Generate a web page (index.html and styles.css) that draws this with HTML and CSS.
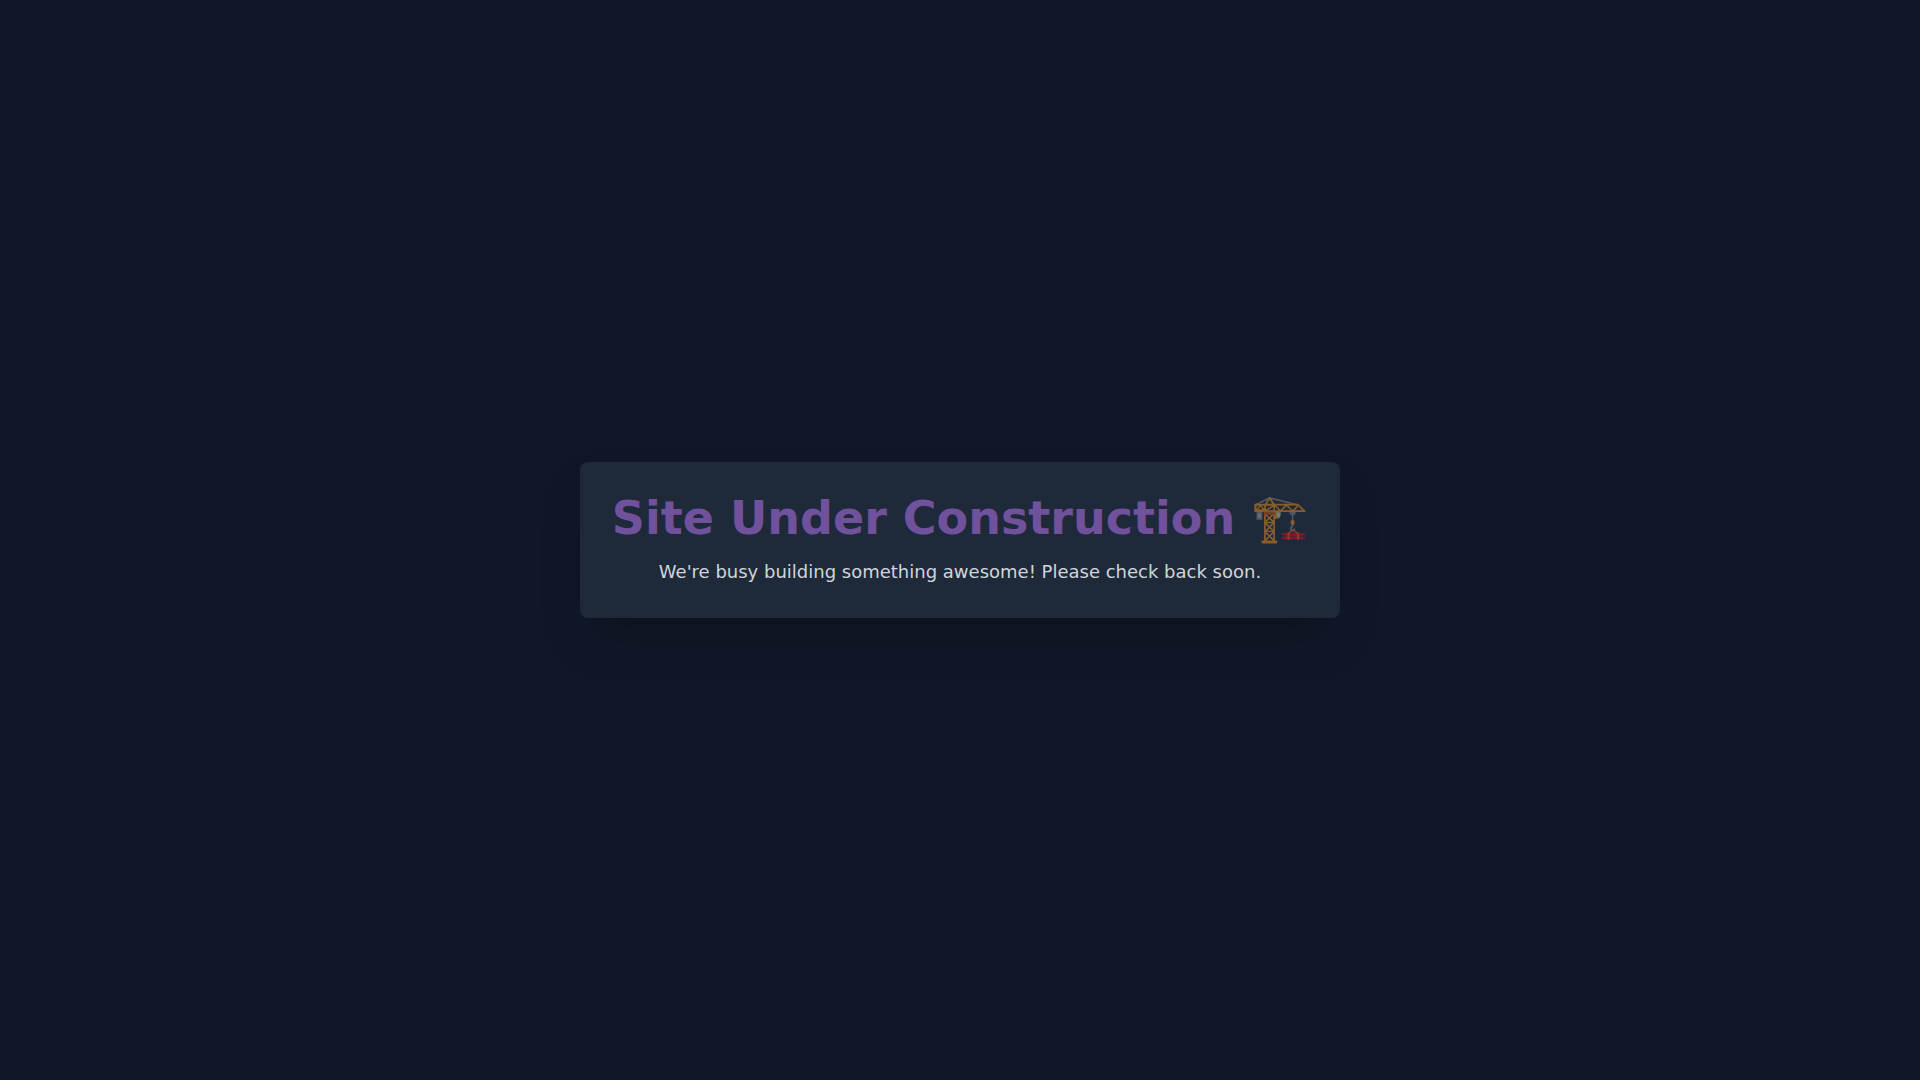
FILE: index.html
```html
<!DOCTYPE html>
<html lang="en">

<head>
    <meta charset="UTF-8">
    <meta name="viewport" content="width=device-width, initial-scale=1.0">
    <title>Site Under Construction</title>
    <link rel="stylesheet" href="styles.css">
</head>

<body>
    <main class="card">
        <h1 class="title">Site Under Construction 🏗️</h1>
        <p class="message">We're busy building something awesome! Please check back soon.</p>
    </main>
</body>

</html>
```

FILE: styles.css
```css
* {
    box-sizing: border-box;
    margin: 0;
}

body {
    display: flex;
    align-items: center;
    justify-content: center;
    min-height: 100vh;
    background-color: #101828;
    font-family: "DejaVu Sans", sans-serif;
}

.card {
    padding: 32px;
    border-radius: 8px;
    background-color: #1e2939;
    box-shadow: 0 25px 50px -12px rgba(0, 0, 0, 0.25);
    text-align: center;
}

.title {
    margin-bottom: 16px;
    color: #c27aff;
    font-size: 46px;
    line-height: 48px;
    opacity: 0.5;
}

.message {
    color: #d1d5dc;
    font-size: 18px;
    line-height: 28px;
}
```
